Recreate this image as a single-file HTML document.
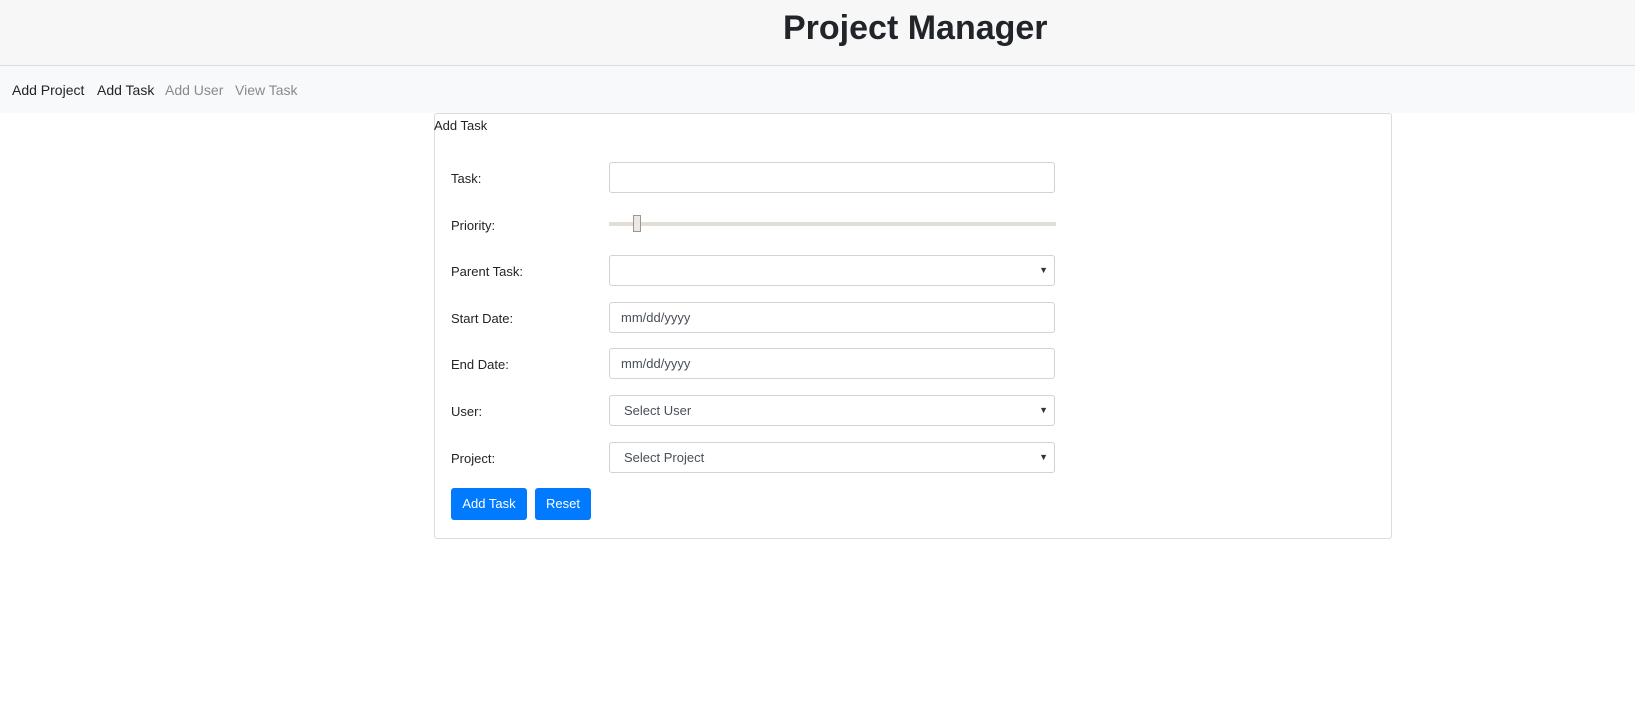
<!DOCTYPE html>
<html><head><style>
body{margin:0;width:1635px;height:724px;background:#fff;font-family:"Liberation Sans",sans-serif;color:#212529;position:relative;overflow:hidden}
.a{position:absolute}
.hdr{left:0;top:0;width:1635px;height:65px;background:#f7f7f7;border-bottom:1px solid #dcdcdc}
.nav{left:0;top:66px;width:1635px;height:47px;background:#f8f9fa}
.nav span{position:absolute;top:16px;font-size:14px}
.card{left:434px;top:113px;width:956px;height:424px;border:1px solid #dcdcdc;border-radius:3px}
.lbl{left:451px;font-size:13px}
.inp{left:609px;width:446px;height:31px;border:1px solid #ced4da;border-radius:3px;background:#fff;font-size:13px;color:#495057;box-sizing:border-box;padding:7px 0 0 11px}
.car{position:absolute;right:6px;top:9px;font-size:9px;color:#333}
.btn{top:488px;height:32px;background:#007bff;color:#fff;border-radius:3px;font-size:13px;text-align:center;line-height:32px}
</style></head><body>
<div class="a hdr"></div>
<div class="a" style="left:783px;top:9px;font-size:34px;font-weight:bold;color:#212529">Project Manager</div>
<div class="a nav">
<span style="left:12px;color:#212529">Add Project</span>
<span style="left:97px;color:#212529">Add Task</span>
<span style="left:165px;color:#8a8a8a">Add User</span>
<span style="left:235px;color:#8a8a8a">View Task</span>
</div>
<div class="a card"></div>
<div class="a" style="left:434px;top:118px;font-size:13px">Add Task</div>
<div class="a lbl" style="top:171px">Task:</div>
<div class="a inp" style="top:162px"></div>
<div class="a lbl" style="top:218px">Priority:</div>
<div class="a" style="left:609px;top:222px;width:447px;height:4px;background:#e2ddd6"></div>
<div class="a" style="left:633px;top:215px;width:8px;height:17px;border:1px solid #9a9590;background:#ece9e4;box-sizing:border-box"></div>
<div class="a lbl" style="top:264px">Parent Task:</div>
<div class="a inp" style="top:255px"><span class="car">▼</span></div>
<div class="a lbl" style="top:311px">Start Date:</div>
<div class="a inp" style="top:302px">mm/dd/yyyy</div>
<div class="a lbl" style="top:357px">End Date:</div>
<div class="a inp" style="top:348px">mm/dd/yyyy</div>
<div class="a lbl" style="top:404px">User:</div>
<div class="a inp" style="top:395px;padding-left:14px">Select User<span class="car">▼</span></div>
<div class="a lbl" style="top:451px">Project:</div>
<div class="a inp" style="top:442px;padding-left:14px">Select Project<span class="car">▼</span></div>
<div class="a btn" style="left:451px;width:76px">Add Task</div>
<div class="a btn" style="left:535px;width:56px">Reset</div>
</body></html>
